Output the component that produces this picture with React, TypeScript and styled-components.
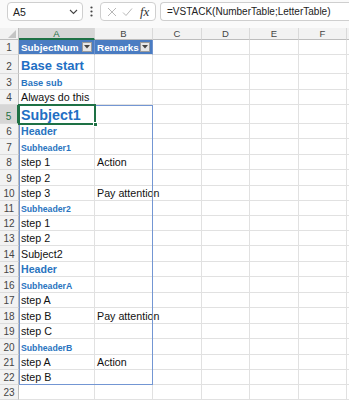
import React from "react";
import styled, { createGlobalStyle, css } from "styled-components";

const GlobalStyle = createGlobalStyle`
  html, body { margin: 0; padding: 0; background: #ffffff; }
  body { font-family: "Liberation Sans", Arial, sans-serif; overflow: hidden; }
  * { box-sizing: border-box; }
`;

const Page = styled.div`
  width: 349px;
  height: 400px;
  overflow: hidden;
  background: #ffffff;
`;

const TopBar = styled.div`
  height: 28px;
  display: flex;
  align-items: flex-start;
  padding: 2px 0 0 7px;
  background: #fafafa;
`;

const Box = styled.div`
  height: 19px;
  border: 1px solid #cfcfcf;
  border-radius: 4px;
  background: #ffffff;
  display: flex;
  align-items: center;
`;

const NameBox = styled(Box)`
  width: 76px;
  justify-content: space-between;
  padding: 0 4px 0 5px;
  font-size: 10.5px;
  color: #222;
`;

const Dots = styled.div`
  width: 17px;
  height: 19px;
  display: flex;
  align-items: center;
  justify-content: center;
`;

const FxBox = styled(Box)`
  width: 56px;
  padding: 0 4px 0 6px;
  gap: 5px;
`;

const Fx = styled.span`
  font-family: "Liberation Serif", "Times New Roman", serif;
  font-style: italic;
  font-size: 13px;
  color: #333;
  margin-left: 2px;
`;

const FormulaInput = styled(Box)`
  flex: 1;
  margin-left: 4px;
  border-right: none;
  border-radius: 4px 0 0 4px;
  padding-left: 6px;
  font-size: 10px;
  color: #222;
  white-space: nowrap;
`;

const Sheet = styled.div`
  position: relative;
  display: grid;
  width: max-content;
  grid-template-columns: 19px 76px 58px 49px 48px 49px 48px 48px;
`;

const ColHead = styled.div<{ $sel?: boolean }>`
  height: 12px;
  background: ${(p) => (p.$sel ? "#d6d6d6" : "#f2f2f2")};
  border-right: 1px solid #d9d9d9;
  border-bottom: ${(p) => (p.$sel ? "2px solid #1e7145" : "1px solid #bdbdbd")};
  color: ${(p) => (p.$sel ? "#1e7145" : "#444")};
  font-size: 9.5px;
  line-height: 11px;
  text-align: center;
`;

const Corner = styled.div`
  height: 12px;
  background: #f2f2f2;
  border-right: 1px solid #bdbdbd;
  border-bottom: 1px solid #bdbdbd;
  display: flex;
  align-items: flex-end;
  justify-content: flex-end;
  padding: 0 2px 1px 0;
`;

const RowHead = styled.div<{ $sel?: boolean; $h: number }>`
  height: ${(p) => p.$h}px;
  background: ${(p) => (p.$sel ? "#d6d6d6" : "#f2f2f2")};
  border-right: ${(p) => (p.$sel ? "2px solid #1e7145" : "1px solid #bdbdbd")};
  border-bottom: 1px solid #dcdcdc;
  color: ${(p) => (p.$sel ? "#1e7145" : "#444")};
  font-size: 10px;
  display: flex;
  align-items: flex-end;
  justify-content: center;
  padding-bottom: 1px;
`;

type Kind = "normal" | "title" | "h1" | "h2" | "h3" | "h4" | "th";

const kindStyles: Record<Kind, ReturnType<typeof css>> = {
  normal: css`font-size: 10.7px; color: #111;`,
  title: css`font-size: 13px; font-weight: bold; color: #1f6fc4;`,
  h1: css`font-size: 14.3px; font-weight: bold; color: #1f6fc4;`,
  h2: css`font-size: 10.6px; font-weight: bold; color: #2a74c0;`,
  h3: css`font-size: 9.3px; font-weight: bold; color: #2a74c0;`,
  h4: css`font-size: 8.7px; font-weight: bold; color: #2a74c0;`,
  th: css`font-size: 9.9px; font-weight: bold; color: #ffffff;`,
};

const Cell = styled.div<{ $h: number; $kind: Kind; $fill?: boolean }>`
  height: ${(p) => p.$h}px;
  border-right: 1px solid ${(p) => (p.$fill ? "#6f94cf" : "#e1e1e1")};
  border-bottom: 1px solid #e1e1e1;
  background: ${(p) => (p.$fill ? "#4a7cc2" : "transparent")};
  padding: 0 2px 1px 2px;
  display: flex;
  align-items: flex-end;
  justify-content: space-between;
  white-space: nowrap;
  overflow: visible;
  line-height: 1;
  ${(p) => kindStyles[p.$kind]}
`;

const FilterBtn = styled.div`
  width: 10px;
  height: 10px;
  margin-bottom: 1px;
  background: #e6e6e6;
  border: 1px solid #9a9a9a;
  display: flex;
  align-items: center;
  justify-content: center;
  flex-shrink: 0;
`;

const SpillBorder = styled.div`
  position: absolute;
  border: 1.5px solid #7396d3;
  pointer-events: none;
`;

const Selection = styled.div`
  position: absolute;
  border: 2px solid #1e7145;
  pointer-events: none;
`;

const Handle = styled.div`
  position: absolute;
  right: -4px;
  bottom: -4px;
  width: 5px;
  height: 5px;
  background: #1e7145;
  border: 1px solid #ffffff;
`;

type Row = { h: number; a?: string; ak?: Kind; b?: string; bk?: Kind };

const rows: Row[] = [
  { h: 15, a: "SubjectNum", ak: "th", b: "Remarks", bk: "th" },
  { h: 19, a: "Base start", ak: "title" },
  { h: 16, a: "Base sub", ak: "h3" },
  { h: 15, a: "Always do this" },
  { h: 19, a: "Subject1", ak: "h1" },
  { h: 15, a: "Header", ak: "h2" },
  { h: 16, a: "Subheader1", ak: "h4" },
  { h: 15, a: "step 1", b: "Action" },
  { h: 16, a: "step 2" },
  { h: 15, a: "step 3", b: "Pay attention" },
  { h: 15, a: "Subheader2", ak: "h4" },
  { h: 15, a: "step 1" },
  { h: 15, a: "step 2" },
  { h: 16, a: "Subject2" },
  { h: 15, a: "Header", ak: "h2" },
  { h: 16, a: "SubheaderA", ak: "h4" },
  { h: 15, a: "step A" },
  { h: 16, a: "step B", b: "Pay attention" },
  { h: 15, a: "step C" },
  { h: 16, a: "SubheaderB", ak: "h4" },
  { h: 15, a: "step A", b: "Action" },
  { h: 15, a: "step B" },
  { h: 15 },
];

// The 7th column is only 2px visible at the right edge; its letter is off-screen.
const cols = ["A", "B", "C", "D", "E", "F", ""];

const Tri = () => (
  <svg width="6" height="4" viewBox="0 0 6 4">
    <path d="M0 0 H6 L3 3.5 Z" fill="#444" />
  </svg>
);

export default function App() {
  const headerH = 12;
  const tops: number[] = [];
  let acc = headerH;
  rows.forEach((r) => {
    tops.push(acc);
    acc += r.h;
  });
  const spillTop = tops[4];
  const spillBottom = tops[21] + rows[21].h;

  return (
    <Page>
      <GlobalStyle />
      <TopBar>
        <NameBox>
          <span>A5</span>
          <svg width="9" height="6" viewBox="0 0 9 6">
            <path d="M1 1 L4.5 4.5 L8 1" stroke="#444" strokeWidth="1.1" fill="none" />
          </svg>
        </NameBox>
        <Dots>
          <svg width="3" height="11" viewBox="0 0 3 11">
            <circle cx="1.5" cy="1.5" r="1.1" fill="#444" />
            <circle cx="1.5" cy="5.5" r="1.1" fill="#444" />
            <circle cx="1.5" cy="9.5" r="1.1" fill="#444" />
          </svg>
        </Dots>
        <FxBox>
          <svg width="10" height="10" viewBox="0 0 10 10">
            <path d="M1 1 L9 9 M9 1 L1 9" stroke="#b8b8b8" strokeWidth="1" />
          </svg>
          <svg width="11" height="10" viewBox="0 0 11 10">
            <path d="M1 5.5 L4 8.5 L10 1.5" stroke="#b8b8b8" strokeWidth="1" fill="none" />
          </svg>
          <Fx>fx</Fx>
        </FxBox>
        <FormulaInput>=VSTACK(NumberTable;LetterTable)</FormulaInput>
      </TopBar>
      <Sheet>
        <Corner>
          <svg width="8" height="8" viewBox="0 0 8 8">
            <path d="M8 0 V8 H0 Z" fill="#c4c4c4" />
          </svg>
        </Corner>
        {cols.map((c, ci) => (
          <ColHead key={ci} $sel={c === "A"}>
            {c}
          </ColHead>
        ))}
        {rows.map((r, i) => (
          <React.Fragment key={i}>
            <RowHead $h={r.h} $sel={i === 4}>
              {i + 1}
            </RowHead>
            <Cell $h={r.h} $kind={r.ak ?? "normal"} $fill={i === 0}>
              {r.a && <span>{r.a}</span>}
              {i === 0 && (
                <FilterBtn>
                  <Tri />
                </FilterBtn>
              )}
            </Cell>
            <Cell $h={r.h} $kind={r.bk ?? "normal"} $fill={i === 0}>
              {r.b && <span>{r.b}</span>}
              {i === 0 && (
                <FilterBtn>
                  <Tri />
                </FilterBtn>
              )}
            </Cell>
            {cols.slice(2).map((_, ci) => (
              <Cell key={ci} $h={r.h} $kind="normal" />
            ))}
          </React.Fragment>
        ))}
        <SpillBorder
          style={{ left: 19, top: spillTop, width: 134, height: spillBottom - spillTop }}
        />
        <Selection style={{ left: 18, top: spillTop - 1, width: 78, height: rows[4].h + 2 }}>
          <Handle />
        </Selection>
      </Sheet>
    </Page>
  );
}
